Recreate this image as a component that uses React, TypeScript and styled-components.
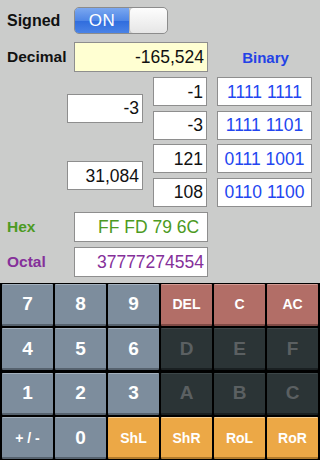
import React from 'react'
import styled, { createGlobalStyle, css } from 'styled-components'

const GlobalStyle = createGlobalStyle`
  html, body {
    margin: 0;
    padding: 0;
    background: #000;
  }
  body {
    font-family: 'Liberation Sans', Arial, sans-serif;
  }
`

type Tone = 'slate' | 'red' | 'dark' | 'orange'

type Key = {
  label: string
  tone: Tone
  small?: boolean
}

const keys: Key[] = [
  { label: '7', tone: 'slate' },
  { label: '8', tone: 'slate' },
  { label: '9', tone: 'slate' },
  { label: 'DEL', tone: 'red', small: true },
  { label: 'C', tone: 'red', small: true },
  { label: 'AC', tone: 'red', small: true },
  { label: '4', tone: 'slate' },
  { label: '5', tone: 'slate' },
  { label: '6', tone: 'slate' },
  { label: 'D', tone: 'dark' },
  { label: 'E', tone: 'dark' },
  { label: 'F', tone: 'dark' },
  { label: '1', tone: 'slate' },
  { label: '2', tone: 'slate' },
  { label: '3', tone: 'slate' },
  { label: 'A', tone: 'dark' },
  { label: 'B', tone: 'dark' },
  { label: 'C', tone: 'dark' },
  { label: '+ / -', tone: 'slate', small: true },
  { label: '0', tone: 'slate' },
  { label: 'ShL', tone: 'orange', small: true },
  { label: 'ShR', tone: 'orange', small: true },
  { label: 'RoL', tone: 'orange', small: true },
  { label: 'RoR', tone: 'orange', small: true },
]

const bytes = [
  { dec: '-1', bin: '1111 1111' },
  { dec: '-3', bin: '1111 1101' },
  { dec: '121', bin: '0111 1001' },
  { dec: '108', bin: '0110 1100' },
]

const App: React.FC = () => {
  return (
    <>
      <GlobalStyle />
      <Screen>
        <Panel>
          <Row>
            <Label>Signed</Label>
            <Toggle>
              <ToggleOn>ON</ToggleOn>
              <Knob />
            </Toggle>
          </Row>
          <DecimalRow>
            <Label size={15.5}>Decimal</Label>
            <Field wide yellow>-165,524</Field>
            <BinaryTitle>Binary</BinaryTitle>
          </DecimalRow>
          <ByteGrid>
            <Field style={{ gridRow: '1 / span 2' }} centerSelf>
              -3
            </Field>
            <Field style={{ gridRow: '3 / span 2' }} centerSelf>
              31,084
            </Field>
            {bytes.map((b, i) => (
              <React.Fragment key={i}>
                <Field style={{ gridColumn: 2, gridRow: i + 1 }}>{b.dec}</Field>
                <BinField style={{ gridColumn: 3, gridRow: i + 1 }}>{b.bin}</BinField>
              </React.Fragment>
            ))}
          </ByteGrid>
          <BaseRow>
            <Label size={15.5} color="#4c9a22">
              Hex
            </Label>
            <Field wide color="#4c9a22">
              FF FD 79 6C&nbsp;
            </Field>
          </BaseRow>
          <BaseRow>
            <Label size={15.5} color="#85309a">
              Octal
            </Label>
            <Field wide color="#85309a">
              37777274554
            </Field>
          </BaseRow>
        </Panel>
        <Keypad>
          {keys.map((k, i) => (
            <KeyButton key={i} tone={k.tone} small={k.small}>
              {k.label}
            </KeyButton>
          ))}
        </Keypad>
      </Screen>
    </>
  )
}

export default App

const Screen = styled.div`
  width: 320px;
  height: 460px;
  display: flex;
  flex-direction: column;
  overflow: hidden;
`

const Panel = styled.div`
  height: 283px;
  box-sizing: border-box;
  background: #cbcccb;
  padding: 7px 0 0 0;
  display: flex;
  flex-direction: column;
`

const Row = styled.div`
  display: flex;
  align-items: center;
  height: 27px;
`

const Label = styled.div<{ size?: number; color?: string }>`
  width: 74px;
  box-sizing: border-box;
  padding-left: 7px;
  font-weight: bold;
  font-size: ${(p) => p.size || 16}px;
  color: ${(p) => p.color || '#111'};
`

const Toggle = styled.div`
  width: 94px;
  height: 27px;
  box-sizing: border-box;
  border: 1px solid #8c8c8c;
  border-radius: 5px;
  overflow: hidden;
  display: flex;
`

const ToggleOn = styled.div`
  width: 54px;
  display: flex;
  align-items: center;
  justify-content: center;
  background: linear-gradient(#7aa7f0 0%, #4f86e6 50%, #2f6cdd 51%, #4a83e6 100%);
  color: #fff;
  font-size: 17px;
  letter-spacing: 0.5px;
  padding-top: 1px;
`

const Knob = styled.div`
  flex: 1;
  background: linear-gradient(#fdfdfd, #e6e6e6);
  border-left: 1px solid #b4b4b4;
  border-radius: 4px;
`

const DecimalRow = styled.div`
  display: flex;
  align-items: center;
  height: 30px;
  margin-top: 8px;
`

const BinaryTitle = styled.div`
  margin-left: 10px;
  width: 95px;
  text-align: center;
  font-weight: bold;
  font-size: 15px;
  color: #2342e6;
`

const Field = styled.div<{ wide?: boolean; yellow?: boolean; color?: string; centerSelf?: boolean }>`
  box-sizing: border-box;
  height: ${(p) => (p.wide ? 30 : 29)}px;
  ${(p) =>
    p.wide &&
    css`
      width: 134px;
    `}
  border: 1px solid #8e8e8e;
  background: ${(p) => (p.yellow ? '#ffffd2' : '#fff')};
  color: ${(p) => p.color || '#111'};
  font-size: 17.5px;
  display: flex;
  align-items: center;
  justify-content: flex-end;
  padding: 1px 3px 0 0;
  white-space: pre;
  ${(p) =>
    p.centerSelf &&
    css`
      align-self: center;
    `}
`

const BinField = styled(Field)`
  justify-content: center;
  padding-right: 0;
  color: #2346f0;
`

const ByteGrid = styled.div`
  display: grid;
  margin-top: 5px;
  padding-left: 67px;
  grid-template-columns: 76px 54px 95px;
  grid-template-rows: repeat(4, 29px);
  column-gap: 10px;
  row-gap: 4.67px;
`

const BaseRow = styled.div`
  display: flex;
  align-items: center;
  height: 30px;
  margin-top: 5px;
  &:first-of-type {
    margin-top: 4px;
  }
`

const tones: Record<Tone, { bg: string; top: string; bottom: string; text: string }> = {
  slate: { bg: '#7d8d9d', top: '#a3b0bd', bottom: '#56626e', text: '#fff' },
  red: { bg: '#b26e67', top: '#d29a93', bottom: '#7f4a45', text: '#fff' },
  dark: { bg: '#2b3436', top: '#3c4648', bottom: '#1a2022', text: '#5b6062' },
  orange: { bg: '#eca846', top: '#f8d197', bottom: '#b07a2c', text: '#fff' },
}

const Keypad = styled.div`
  flex: 1;
  background: #000;
  display: grid;
  grid-template-columns: repeat(6, 1fr);
  grid-template-rows: repeat(4, 1fr);
  gap: 2.4px 2px;
  padding: 1px 2px 1px 2px;
`

const KeyButton = styled.div<{ tone: Tone; small?: boolean }>`
  display: flex;
  align-items: center;
  justify-content: center;
  background: ${(p) => tones[p.tone].bg};
  border-top: 1px solid ${(p) => tones[p.tone].top};
  border-bottom: 2px solid ${(p) => tones[p.tone].bottom};
  border-radius: 1px;
  color: ${(p) => tones[p.tone].text};
  font-weight: bold;
  font-size: ${(p) => (p.small ? 14 : 19)}px;
  white-space: pre;
`
